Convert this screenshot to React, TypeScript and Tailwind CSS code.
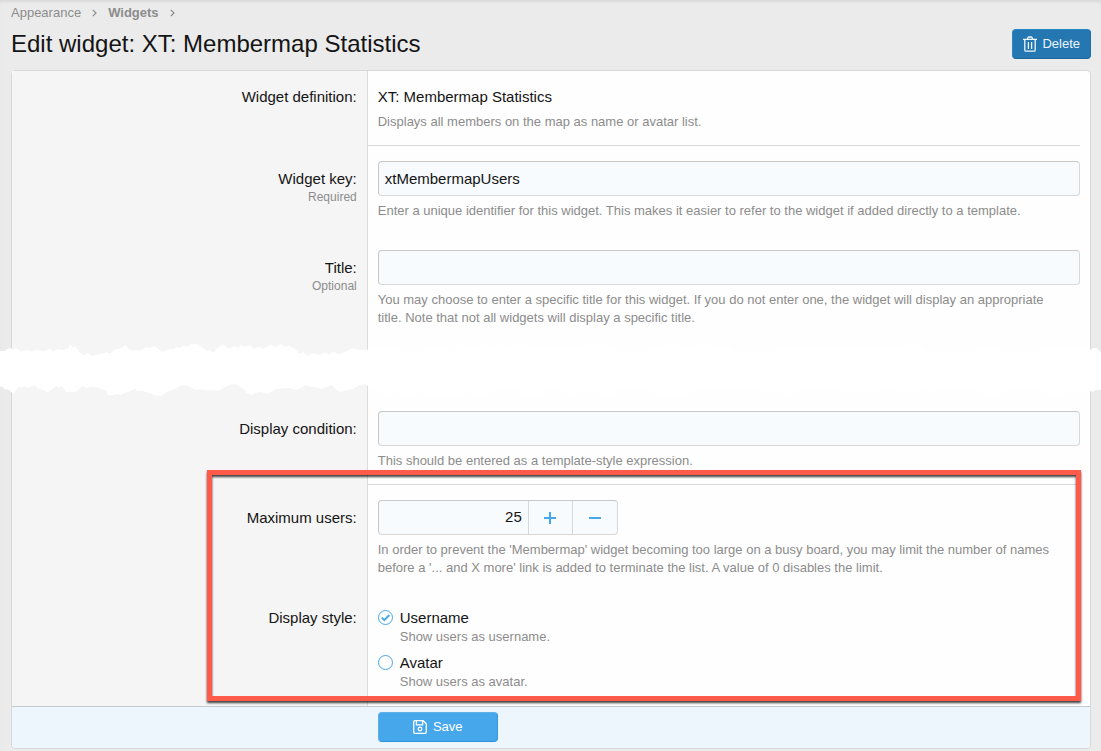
import { useState, type ReactNode } from 'react';

type RowProps = {
  label: string;
  htmlFor?: string;
  labelId?: string;
  note?: string;
  labelPad?: string;
  bottomPad?: string;
  children: ReactNode;
};

function FormRow({ label, htmlFor, labelId, note, labelPad = 'pt-[22px]', bottomPad = 'pb-[15px]', children }: RowProps) {
  return (
    <div className="flex">
      <div className={`w-[33%] shrink-0 border-r border-[#dcdcdc] bg-[#f5f5f5] pr-[10px] text-right ${labelPad}`}>
        {htmlFor ? (
          <label htmlFor={htmlFor} className="block leading-[21px]">{label}</label>
        ) : (
          <span id={labelId} className="block leading-[21px]">{label}</span>
        )}
        {note && <span className="block text-[12px] leading-[16px] text-[#8c8c8c]">{note}</span>}
      </div>
      <div className={`min-w-0 flex-1 px-[10px] pt-[15px] ${bottomPad}`}>{children}</div>
    </div>
  );
}

function Hint({ id, children }: { id?: string; children: ReactNode }) {
  return <p id={id} className="mt-[6px] pr-4 text-[13px] leading-[18px] text-[#8c8c8c]">{children}</p>;
}

function Divider() {
  return (
    <div className="flex">
      <div className="w-[33%] shrink-0 border-r border-[#dcdcdc] bg-[#f5f5f5]" />
      <div className="mr-[10px] h-px flex-1 bg-[#d8d8d8]" />
    </div>
  );
}

const fieldBorder = 'rounded border border-t-[#c8c8c8] border-r-[#d8d8d8] border-b-[#d8d8d8] border-l-[#c8c8c8] bg-[#f7fbfe]';

function TextField({ id, initial = '' }: { id: string; initial?: string }) {
  const [value, setValue] = useState(initial);
  return (
    <input
      id={id}
      type="text"
      value={value}
      aria-describedby={`${id}-hint`}
      onChange={(e) => setValue(e.target.value)}
      className={`block h-[35px] w-full px-[6px] outline-none ${fieldBorder}`}
    />
  );
}

function TornBand() {
  return (
    <svg
      aria-hidden="true"
      viewBox="0 0 3303 210"
      preserveAspectRatio="none"
      className="pointer-events-none absolute -top-[7px] -right-[11px] -left-3 h-[70px] w-[calc(100%+23px)]"
    >
      <path
        fill="#ffffff"
        d="M0 48 15 48 20 41 32 40 42 44 50 40 64 50 80 44 95 49 110 44 128 49 150 43 160 49 174 42 190 45 203 41 210 29 216 35 227 36 238 51 251 60 262 55 278 63 295 57 310 55 320 52 330 56 345 43 362 40 376 31 390 46 425 46 436 36 450 40 462 32 475 42 486 50 510 43 522 43 530 36 540 38 552 32 566 33 572 28 594 28 604 35 620 46 632 48 640 53 652 40 663 33 668 29 680 37 690 41 703 34 716 40 722 31 735 35 752 31 762 41 775 36 790 41 806 32 815 29 824 37 842 28 856 35 866 33 884 40 895 55 903 57 908 50 922 62 940 55 958 60 975 53 985 59 1002 50 1015 58 1036 51 1056 40 1075 45 1103 44 1125 38 1140 48 1165 40 1190 47 1232 50 1280 49 1300 37 1325 42 1368 49 1380 31 1400 36 1430 44 1450 29 1475 33 1495 27 1515 38 1550 29 1570 27 1590 37 1620 30 1640 40 1660 32 1680 45 1710 36 1740 38 1770 27 1810 31 1840 37 1860 51 1895 57 1925 49 1960 43 1980 31 2030 30 2070 34 2115 29 2150 34 2190 38 2205 52 2225 47 2250 49 2280 55 2325 50 2358 40 2390 47 2420 36 2450 30 2480 43 2520 39 2545 45 2600 33 2640 44 2680 35 2720 29 2755 28 2785 52 2815 55 2860 48 2890 55 2940 44 2970 35 3000 47 3030 51 3065 47 3110 50 3150 40 3180 34 3200 39 3225 37 3255 44 3268 47 3277 40 3288 38 3295 44 3303 50V165L3285 165 3280 170 3270 168 3250 177 3220 168 3200 175 3175 179 3140 176 3120 163 3080 154 3050 155 3020 167 2990 176 2950 178 2920 165 2900 166 2870 155 2840 156 2800 171 2760 164 2735 176 2700 169 2670 156 2650 156 2620 170 2580 175 2540 171 2520 160 2480 157 2450 165 2420 154 2390 167 2360 179 2330 172 2300 178 2270 162 2230 154 2200 158 2160 155 2130 153 2110 162 2090 166 2070 179 2030 175 1990 180 1960 177 1940 163 1910 158 1870 160 1840 178 1810 180 1780 166 1750 170 1720 181 1690 174 1670 164 1640 166 1620 180 1570 178 1550 164 1500 165 1470 177 1440 182 1410 173 1380 178 1340 174 1310 182 1280 176 1250 174 1220 181 1190 173 1170 181 1150 173 1130 162 1110 153 1102 152 1095 148 1080 149 1060 161 1045 166 1020 170 1010 164 994 149 985 155 965 162 953 158 936 155 918 150 904 159 885 165 870 159 850 160 828 163 815 169 800 177 782 170 768 173 755 180 742 175 730 163 712 149 693 148 670 158 655 169 640 165 620 166 598 163 590 166 575 160 560 151 545 151 530 160 508 167 494 175 484 182 464 181 448 174 427 167 412 168 406 160 388 170 374 173 362 180 350 177 338 181 324 181 318 166 305 163 292 157 270 156 261 160 248 153 230 168 222 171 198 171 186 152 178 157 166 153 155 164 149 167 142 173 132 166 111 159 104 151 84 158 72 153 64 158 57 153 40 177 24 163 15 163 7 155 0 155Z"
      />
    </svg>
  );
}

function TrashIcon() {
  return (
    <svg aria-hidden="true" viewBox="0 0 14 16" className="h-4 w-[14px]" fill="none" stroke="currentColor" strokeWidth="1.3">
      <path d="M0 3.4h14M4.2 3.2 5 1.6q.3-.6 1-.6h2q.7 0 1 .6l.8 1.6M1.8 3.6v10.3q0 1.3 1.3 1.3h7.8q1.3 0 1.3-1.3V3.6M5.4 6v7M8.6 6v7" />
    </svg>
  );
}

function SaveIcon() {
  return (
    <svg aria-hidden="true" viewBox="0 0 14 14" className="size-[14px]" fill="none" stroke="currentColor" strokeWidth="1.3">
      <path d="M.7 2Q.7.7 2 .7h8.2L13.3 3.8V12q0 1.3-1.3 1.3H2Q.7 13.3.7 12ZM3.4.8v4h6.2v-4" />
      <circle cx="7" cy="9" r="1.8" />
    </svg>
  );
}

function BreadcrumbArrow() {
  return (
    <svg aria-hidden="true" viewBox="0 0 5 8" className="h-2 w-[5px]" fill="none" stroke="currentColor" strokeWidth="1.2">
      <path d="M.8.8 4 4 .8 7.2" />
    </svg>
  );
}

type RadioProps = { id: string; title: string; hint: string; checked: boolean; onSelect: () => void };

function RadioOption({ id, title, hint, checked, onSelect }: RadioProps) {
  return (
    <div className="flex gap-[7px]">
      <span className="relative mt-[3px] size-[15px] shrink-0">
        <input
          id={id}
          type="radio"
          name="display-style"
          checked={checked}
          onChange={onSelect}
          aria-describedby={`${id}-hint`}
          className="peer block size-[15px] appearance-none rounded-full border border-[#47a7eb] bg-transparent"
        />
        <svg
          aria-hidden="true"
          viewBox="0 0 15 15"
          className="pointer-events-none absolute inset-0 hidden text-[#47a7eb] peer-checked:block"
          fill="none"
          stroke="currentColor"
          strokeWidth="1.9"
        >
          <path d="m3.8 7.7 2.5 2.5 5-5.2" />
        </svg>
      </span>
      <div>
        <label htmlFor={id} className="block leading-[21px]">{title}</label>
        <p id={`${id}-hint`} className="text-[13px] leading-[18px] text-[#8c8c8c]">{hint}</p>
      </div>
    </div>
  );
}

export default function App() {
  const [limit, setLimit] = useState(25);
  const [style, setStyle] = useState('username');

  return (
    <div className="min-h-screen bg-[#ebebeb] pr-[10px] pb-[2px] pl-[11px] font-['Liberation_Sans',Arial,sans-serif] text-[15px] text-[#141414] shadow-[inset_0_3px_3px_-1px_rgba(0,0,0,0.08)]">
      <nav aria-label="Breadcrumb" className="flex items-center gap-[11px] pt-1 text-[13px] leading-[18px] text-[#8c8c8c]">
        <a href="#appearance">Appearance</a>
        <BreadcrumbArrow />
        <a href="#widgets" className="font-bold">Widgets</a>
        <BreadcrumbArrow />
      </nav>

      <header className="flex h-12 items-center justify-between pb-1">
        <h1 className="text-[24px] leading-[34px]">Edit widget: XT: Membermap Statistics</h1>
        <button
          type="button"
          className="flex h-[30px] items-center gap-[5px] rounded border border-t-[#2a85c4] border-r-[#1f6fa8] border-b-[#1c669a] border-l-[#2a85c4] bg-[#2577b1] px-[10px] text-[13px] text-[#edf6fd]"
        >
          <TrashIcon />
          Delete
        </button>
      </header>

      <form onSubmit={(e) => e.preventDefault()} className="rounded border border-[#d8d8d8] bg-[#fefefe]">
        <FormRow label="Widget definition:" labelPad="pt-[15px]" bottomPad="pb-[14px]">
          <p className="leading-[21px]">XT: Membermap Statistics</p>
          <Hint>Displays all members on the map as name or avatar list.</Hint>
        </FormRow>
        <Divider />
        <FormRow label="Widget key:" htmlFor="widget-key" note="Required">
          <TextField id="widget-key" initial="xtMembermapUsers" />
          <Hint id="widget-key-hint">
            Enter a unique identifier for this widget. This makes it easier to refer to the widget if added directly to a template.
          </Hint>
        </FormRow>
        <FormRow label="Title:" htmlFor="title" note="Optional">
          <TextField id="title" />
          <Hint id="title-hint">
            You may choose to enter a specific title for this widget. If you do not enter one, the widget will display an appropriate title. Note that not all widgets will display a specific title.
          </Hint>
        </FormRow>

        <div className="relative flex h-[54px]">
          <div className="w-[33%] shrink-0 border-r border-[#dcdcdc] bg-[#f5f5f5]" />
          <TornBand />
        </div>

        <FormRow label="Display condition:" htmlFor="display-condition" bottomPad="pb-[14px]">
          <TextField id="display-condition" />
          <Hint id="display-condition-hint">This should be entered as a template-style expression.</Hint>
        </FormRow>

        <section className="relative">
          <Divider />
          <FormRow label="Maximum users:" htmlFor="max-users">
            <div className={`flex h-[35px] w-60 overflow-hidden ${fieldBorder}`}>
              <input
                id="max-users"
                type="text"
                inputMode="numeric"
                value={limit}
                onChange={(e) => setLimit(Number(e.target.value.replace(/\D/g, '')))}
                aria-describedby="max-users-hint"
                className="min-w-0 flex-1 bg-transparent px-[6px] text-right outline-none"
              />
              <button
                type="button"
                aria-label="Increase"
                onClick={() => setLimit(limit + 1)}
                className="flex w-11 items-center justify-center border-l border-[#d8d8d8] text-[#47a7eb]"
              >
                <svg aria-hidden="true" viewBox="0 0 12 12" className="size-3" stroke="currentColor" strokeWidth="2">
                  <path d="M6 0v12M0 6h12" />
                </svg>
              </button>
              <button
                type="button"
                aria-label="Decrease"
                onClick={() => setLimit(Math.max(0, limit - 1))}
                className="flex w-[45px] items-center justify-center border-l border-[#d8d8d8] text-[#47a7eb]"
              >
                <svg aria-hidden="true" viewBox="0 0 12 12" className="size-3" stroke="currentColor" strokeWidth="2">
                  <path d="M0 6h12" />
                </svg>
              </button>
            </div>
            <Hint id="max-users-hint">
              In order to prevent the 'Membermap' widget becoming too large on a busy board, you may limit the number of names before a '... and X more' link is added to terminate the list. A value of 0 disables the limit.
            </Hint>
          </FormRow>
          <FormRow label="Display style:" labelId="display-style-label" labelPad="pt-[15px]">
            <div role="radiogroup" aria-labelledby="display-style-label" className="flex flex-col gap-[6px]">
              <RadioOption
                id="style-username"
                title="Username"
                hint="Show users as username."
                checked={style === 'username'}
                onSelect={() => setStyle('username')}
              />
              <RadioOption
                id="style-avatar"
                title="Avatar"
                hint="Show users as avatar."
                checked={style === 'avatar'}
                onSelect={() => setStyle('avatar')}
              />
            </div>
          </FormRow>
          <div className="pointer-events-none absolute -top-[14px] right-[9px] bottom-[5px] left-[18.1%] border-[5px] border-[#ff5a4a] drop-shadow-[0_2px_1px_rgba(0,0,0,0.75)]" />
        </section>

        <footer className="flex h-[42px] rounded-b border-t border-[#c8c8c8] bg-[#edf6fd]">
          <div className="w-[33%] shrink-0" />
          <div className="px-[10px] pt-[5px]">
            <button
              type="submit"
              className="flex h-[30px] w-[120px] items-center justify-center gap-[6px] rounded border border-t-[#5cb1ed] border-r-[#3498e0] border-b-[#2b93dd] border-l-[#5cb1ed] bg-[#47a7eb] text-[13px] text-white"
            >
              <SaveIcon />
              Save
            </button>
          </div>
        </footer>
      </form>
    </div>
  );
}
